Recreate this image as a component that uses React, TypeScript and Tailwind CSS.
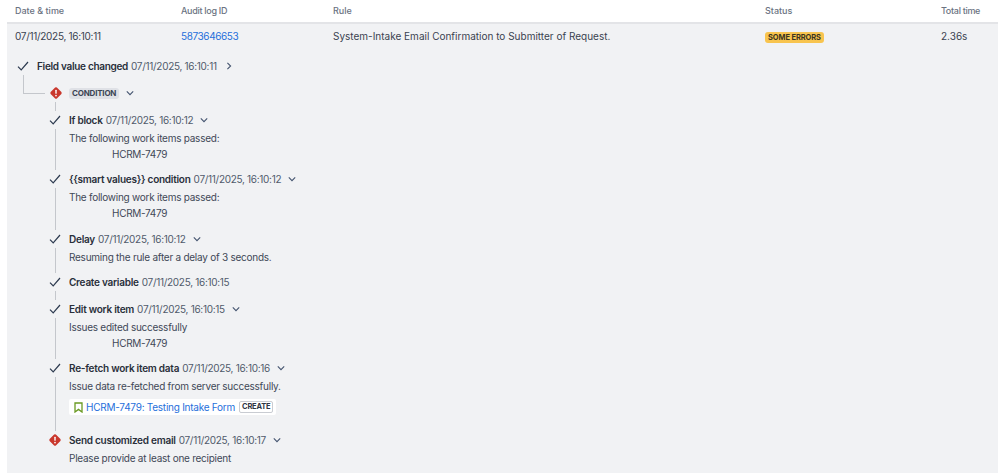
import type { ReactNode } from "react";

const font = { fontFamily: "Inter, 'Liberation Sans', sans-serif" };

function Check() {
    return (
        <svg width="14" height="14" viewBox="0 0 14 14" fill="none">
            <path d="M2 7.6 L5.2 10.8 L12 3" stroke="#2c3a4f" strokeWidth="1.2" />
        </svg>
    );
}

function ErrorIcon() {
    return (
        <svg width="12" height="12" viewBox="0 0 12 12">
            <path
                d="M6 0.2 Q6.5 0.2 6.9 0.6 L11.4 5.1 Q12 6 11.4 6.9 L6.9 11.4 Q6 12 5.1 11.4 L0.6 6.9 Q0 6 0.6 5.1 L5.1 0.6 Q5.5 0.2 6 0.2 Z"
                fill="#c9372c"
            />
            <rect x="5.3" y="2.8" width="1.4" height="4" rx="0.5" fill="#fff" />
            <circle cx="6" cy="8.6" r="0.85" fill="#fff" />
        </svg>
    );
}

function Chevron({ right = false }: { right?: boolean }) {
    return (
        <svg width="8" height="8" viewBox="0 0 8 8" fill="none" className={right ? "-rotate-90" : ""}>
            <path d="M0.8 2.4 L4 5.6 L7.2 2.4" stroke="#44546f" strokeWidth="1.1" />
        </svg>
    );
}

type StepProps = {
    title: string;
    time: string;
    chevron?: boolean;
    error?: boolean;
    line?: boolean;
    gapBelow?: string;
    children?: ReactNode;
};

function Step({ title, time, chevron = true, error = false, line = true, gapBelow = "pb-[7px]", children }: StepProps) {
    return (
        <div className="flex">
            <div className="flex w-[14px] flex-col items-center">
                <div className="flex h-[18px] items-center">{error ? <ErrorIcon /> : <Check />}</div>
                {line && <div className="w-px flex-1 bg-[#c4c7cc]" />}
            </div>
            <div className={`ml-[7px] flex-1 ${gapBelow}`}>
                <div className="flex h-[18px] items-center">
                    <span className="font-semibold tracking-[-0.25px] text-[#292f3a]">{title}</span>
                    <span className="ml-[3px] tracking-[-0.3px] text-[#505a6b]">{time}</span>
                    {chevron && (
                        <span className="ml-[7px] flex">
                            <Chevron />
                        </span>
                    )}
                </div>
                {children}
            </div>
        </div>
    );
}

function Passed({ label }: { label: string }) {
    return (
        <div className="tracking-[-0.25px] text-[#3f4857]">
            <div className="flex h-[18px] items-center">{label}</div>
            <div className="mb-[2px] flex h-[14px] items-center pl-[43px] tracking-[-0.3px]">HCRM-7479</div>
        </div>
    );
}

export default function App() {
    return (
        <div style={font} className="h-[473px] w-[998px] overflow-hidden bg-white text-[10px] leading-4 text-[#3a4250]">
            <div className="grid h-[22px] grid-cols-[166px_152px_432px_176px_1fr] items-center pl-[15px] text-[9px] font-medium text-[#6b7382]">
                <div>Date &amp; time</div>
                <div className="tracking-[-0.3px]">Audit log ID</div>
                <div>Rule</div>
                <div>Status</div>
                <div className="tracking-[-0.3px]">Total time</div>
            </div>
            <div className="ml-[7px] h-[451px] border-t-2 border-[#e3e4e7] bg-[#f1f2f4]">
                <div className="grid h-[24px] grid-cols-[166px_152px_432px_176px_1fr] items-center pl-2">
                    <div className="tracking-[-0.3px]">07/11/2025, 16:10:11</div>
                    <div className="tracking-[-0.4px] text-[#1f6fdb]">5873646653</div>
                    <div>System-Intake Email Confirmation to Submitter of Request.</div>
                    <div>
                        <span className="inline-block rounded-[3px] bg-[#f8c44e] px-[3px] text-[7.5px] leading-[11px] font-bold tracking-[-0.1px] text-[#3a3420]">
                            SOME ERRORS
                        </span>
                    </div>
                    <div>2.36s</div>
                </div>

                <div className="mt-[9px] flex h-[18px] items-center pl-[9px]">
                    <span className="flex w-[21px]">
                        <Check />
                    </span>
                    <span className="font-semibold tracking-[-0.3px] text-[#292f3a]">Field value changed</span>
                    <span className="ml-[3px] tracking-[-0.3px] text-[#505a6b]">07/11/2025, 16:10:11</span>
                    <span className="ml-[8px] flex">
                        <Chevron right />
                    </span>
                </div>

                <div className="flex items-start pl-[16px]">
                    <div className="h-[19px] w-[22px] border-b border-l border-[#c4c7cc]" />
                    <div className="mt-[9px] flex h-[18px] items-center">
                        <span className="ml-[5px] flex w-[19px]">
                            <ErrorIcon />
                        </span>
                        <span className="rounded-[3px] bg-[#dfe1e6] px-[3px] text-[8px] leading-[11px] font-bold tracking-[-0.2px] text-[#3c4554]">
                            CONDITION
                        </span>
                        <span className="ml-[7px] flex">
                            <Chevron />
                        </span>
                    </div>
                </div>

                <div className="ml-[41px]">
                    <div className="ml-[6.5px] h-[9px] w-px bg-[#c4c7cc]" />
                    <Step title="If block" time="07/11/2025, 16:10:12">
                        <Passed label="The following work items passed:" />
                    </Step>
                    <Step title="{{smart values}} condition" time="07/11/2025, 16:10:12" gapBelow="pb-[8px]">
                        <Passed label="The following work items passed:" />
                    </Step>
                    <Step title="Delay" time="07/11/2025, 16:10:12">
                        <div className="flex h-[18px] items-center tracking-[-0.25px] text-[#3f4857]">Resuming the rule after a delay of 3 seconds.</div>
                    </Step>
                    <Step title="Create variable" time="07/11/2025, 16:10:15" chevron={false} gapBelow="pb-[9px]" />
                    <Step title="Edit work item" time="07/11/2025, 16:10:15">
                        <Passed label="Issues edited successfully" />
                    </Step>
                    <Step title="Re-fetch work item data" time="07/11/2025, 16:10:16" gapBelow="pb-[14px]">
                        <div className="flex h-[18px] items-center tracking-[-0.25px] text-[#3f4857]">Issue data re-fetched from server successfully.</div>
                        <div className="mt-[4px] inline-flex h-[16px] items-center rounded-[2px] bg-white pl-[5px] pr-[3px]">
                            <svg width="9" height="11" viewBox="0 0 9 11" fill="none">
                                <path d="M1 1 H8 V10 L4.5 7.4 L1 10 Z" stroke="#6a9a23" strokeWidth="1.3" />
                            </svg>
                            <span className="ml-[3px] tracking-[-0.25px] text-[#1f6fdb]">HCRM-7479: Testing Intake Form</span>
                            <span className="ml-[4px] rounded-[2px] border border-[#c9ccd2] px-[2px] text-[7.5px] leading-[10px] font-bold tracking-[-0.2px] text-[#2e3644]">
                                CREATE
                            </span>
                        </div>
                    </Step>
                    <Step title="Send customized email" time="07/11/2025, 16:10:17" error line={false}>
                        <div className="flex h-[18px] items-center tracking-[-0.25px] text-[#3f4857]">Please provide at least one recipient</div>
                    </Step>
                </div>
            </div>
        </div>
    );
}
